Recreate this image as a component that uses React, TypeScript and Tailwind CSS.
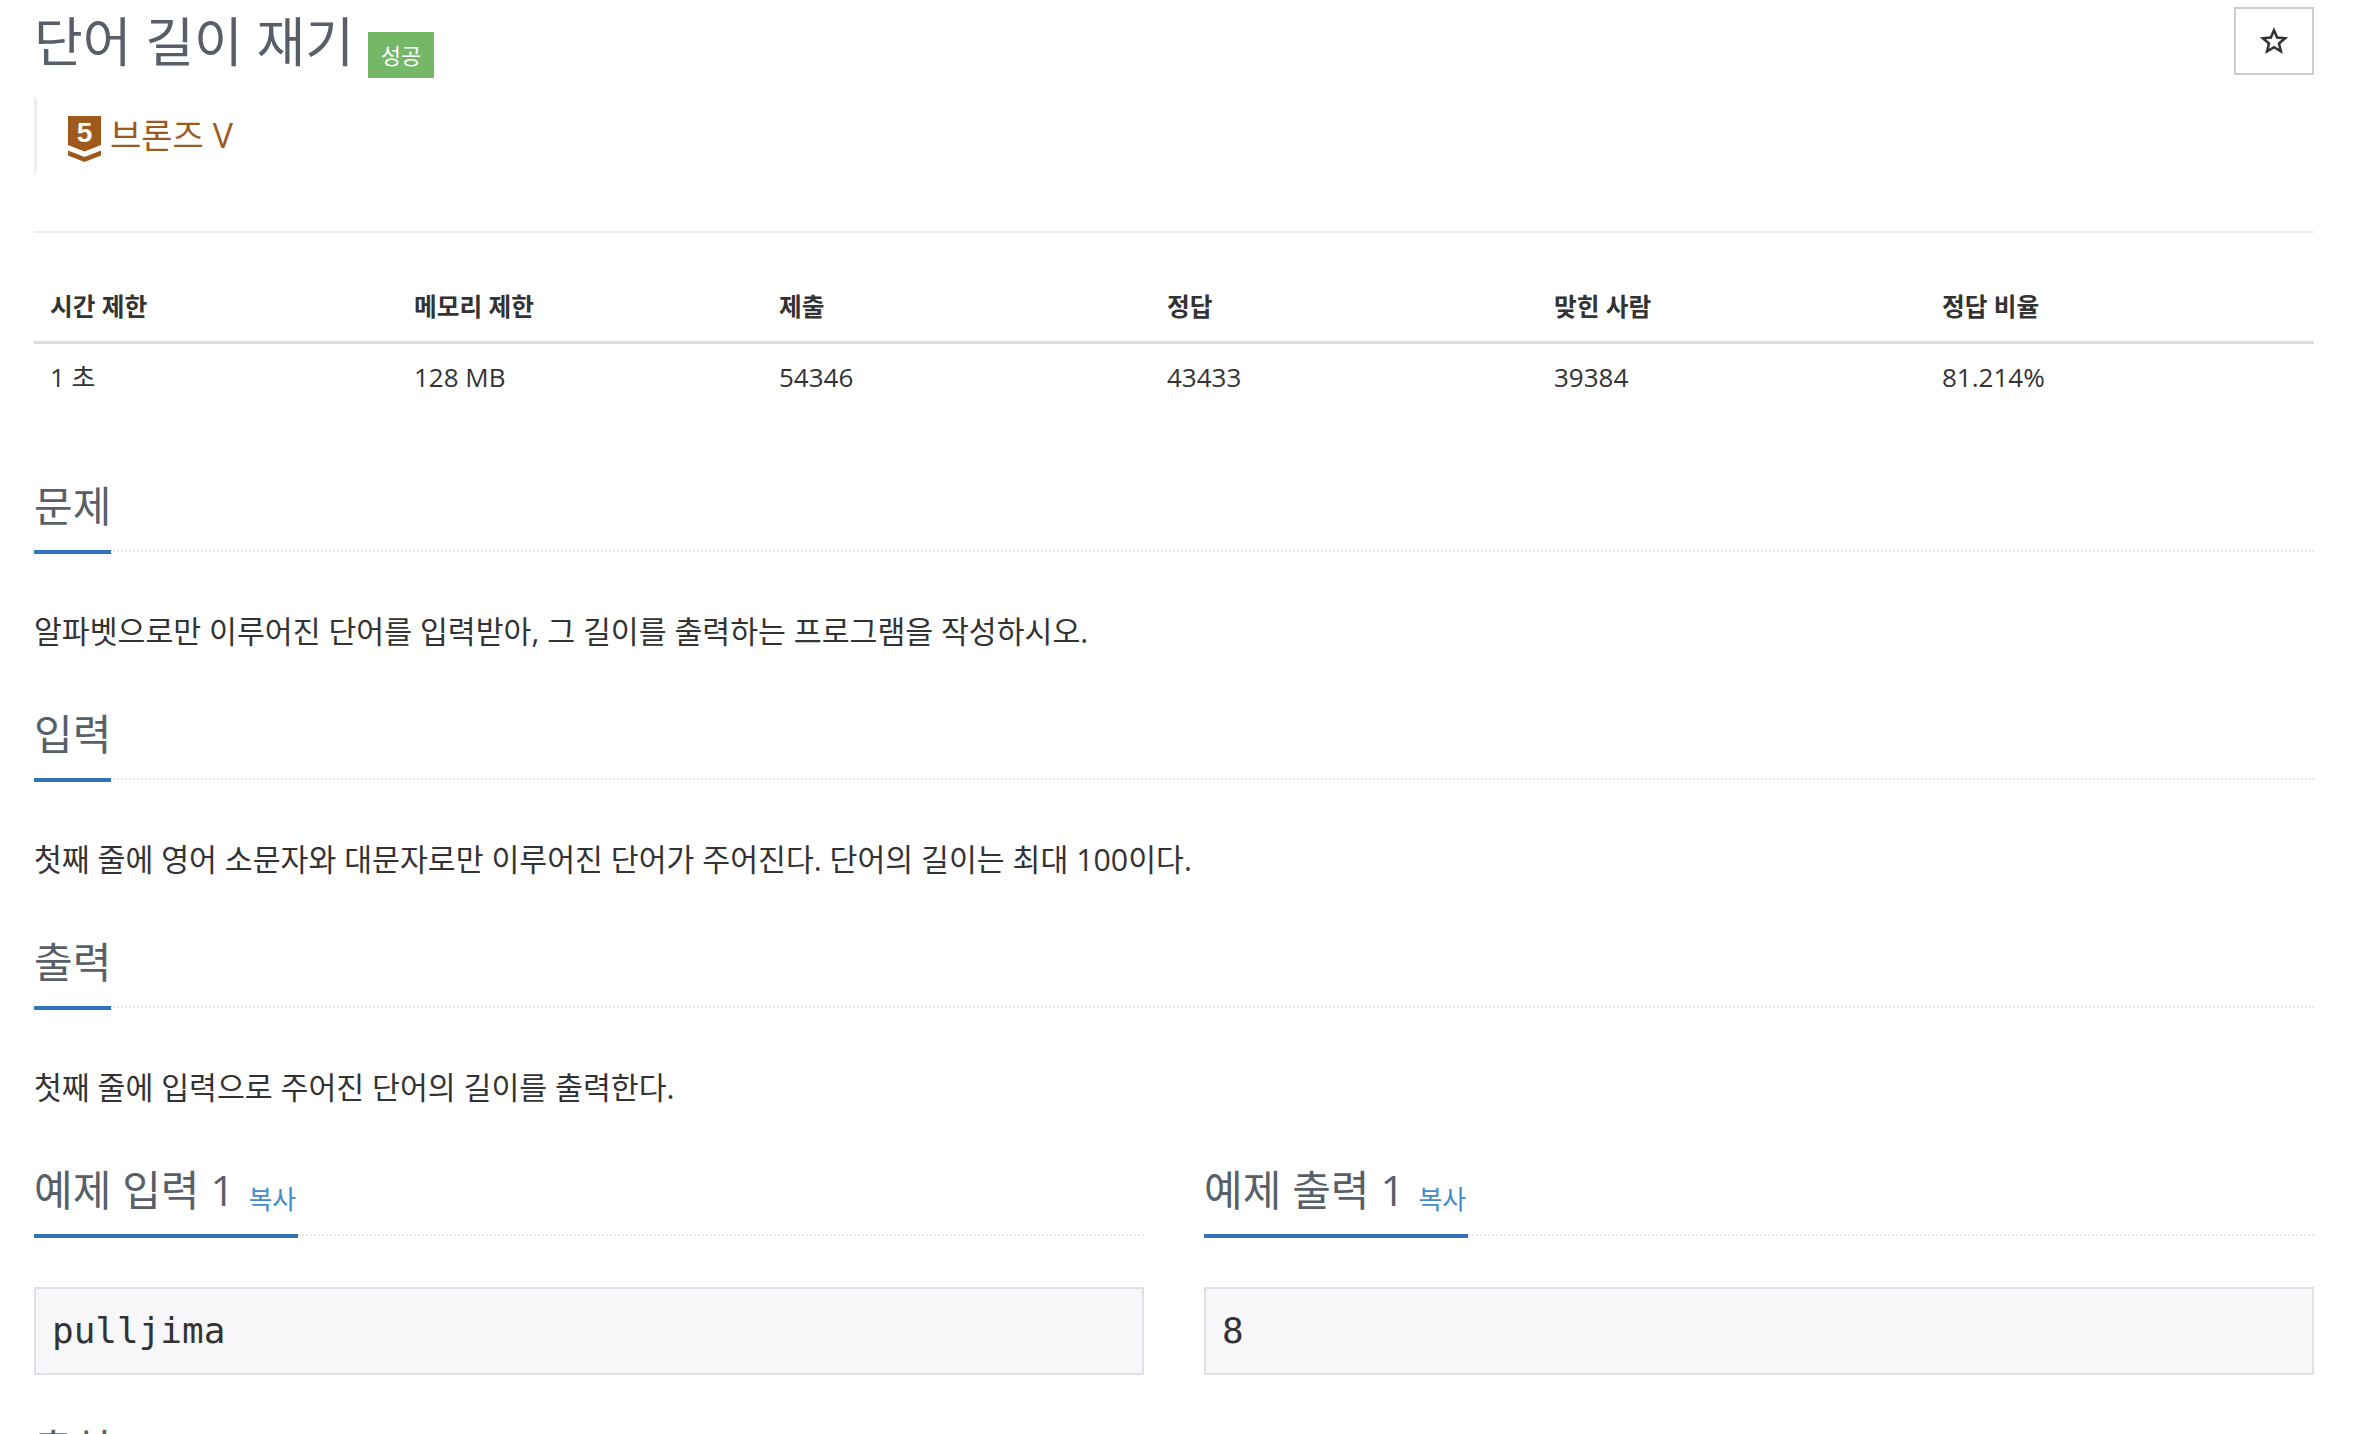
const KO = "font-['Open_Sans','Noto_Sans_CJK_KR',sans-serif]";

const stats = [
  { head: "시간 제한", value: "1 초", w: "w-[364px]" },
  { head: "메모리 제한", value: "128 MB", w: "w-[365px]" },
  { head: "제출", value: "54346", w: "w-[388px]" },
  { head: "정답", value: "43433", w: "w-[387px]" },
  { head: "맞힌 사람", value: "39384", w: "w-[388px]" },
  { head: "정답 비율", value: "81.214%", w: "flex-1" },
];

function Heading({ children, copy }: { children: string; copy?: boolean }) {
  return (
    <div className="h-[74px] border-b-2 border-dotted border-[#e5e7ec]">
      <div className="inline-flex h-[76px] items-start border-b-4 border-[#3073b8]">
        <span className="text-[42px] leading-[56px] text-[#585f69]">{children}</span>
        {copy && <span className="ml-[14px] mr-[2px] mt-[19px] text-[26px] leading-[36px] text-[#428bca]">복사</span>}
      </div>
    </div>
  );
}

function Section({ title, text }: { title: string; text: string }) {
  return (
    <section className="h-[228px]">
      <Heading>{title}</Heading>
      <p className="mt-[60px] text-[30.3px] leading-[40px] text-[#333]">{text}</p>
    </section>
  );
}

function Sample({ title, value }: { title: string; value: string }) {
  return (
    <div>
      <Heading copy>{title}</Heading>
      <pre className="mt-[51px] h-[88px] border-2 border-[#e0e0e6] bg-[#f7f7f9] px-[16px] text-[36px] leading-[84px] text-[#333] font-['DejaVu_Sans_Mono',monospace]">
        {value}
      </pre>
    </div>
  );
}

export default function App() {
  return (
    <div className={`h-[1434px] overflow-hidden bg-white pl-[34px] pr-[56px] ${KO}`}>
      <div className="flex h-[97px] items-start justify-between">
        <div className="flex items-start">
          <h1 className="text-[53px] leading-[84px] text-[#585f69]">단어 길이 재기</h1>
          <span className="ml-[14px] mt-[32px] flex h-[46px] w-[66px] items-center justify-center bg-[#74b767] text-[22px] text-white">
            성공
          </span>
        </div>
        <button className="mt-[7px] flex h-[68px] w-[80px] items-center justify-center border-2 border-[#ccc] text-[#333]">
          <svg viewBox="0 0 24 24" className="h-[28px] w-[28px]" fill="none" stroke="currentColor" strokeWidth="2.2">
            <path d="M12 2.800l2.700 6.300 6.800.6-5.200 4.500 1.600 6.700L12 17.300l-5.900 3.600 1.600-6.700-5.200-4.500 6.800-.6z" />
          </svg>
        </button>
      </div>

      <div className="flex h-[76px] border-l-[3px] border-[#eee] pl-[31px] pt-[19px]">
        <svg viewBox="0 0 33 46" className="h-[46px] w-[33px] shrink-0">
          <path d="M0 0h33v29l-16.500 6.500L0 29z" fill="#a0591d" />
          <path d="M0 34.500l16.500 6.500 16.500-6.500v5L16.500 46 0 39.500z" fill="#a0591d" />
          <text x="16.500" y="26" textAnchor="middle" fontSize="28" fontWeight="700" fill="#fff" fontFamily="'Liberation Sans',sans-serif">5</text>
        </svg>
        <span className="ml-[9px] text-[34px] leading-[38px] text-[#a0591d]">브론즈 V</span>
      </div>

      <div className="mt-[58px] border-t-2 border-[#eee]" />

      <div className="mt-[54px] flex h-[57px] border-b-[3px] border-[#ddd]">
        {stats.map((s) => (
          <div key={s.head} className={`${s.w} px-[16px] text-[24.700px] font-bold leading-[40px] text-[#333]`}>
            {s.head}
          </div>
        ))}
      </div>
      <div className="flex h-[66px]">
        {stats.map((s) => (
          <div key={s.head} className={`${s.w} px-[16px] text-[26px] leading-[66px] text-[#333]`}>
            {s.value}
          </div>
        ))}
      </div>

      <div className="mt-[68px]">
        <Section title="문제" text="알파벳으로만 이루어진 단어를 입력받아, 그 길이를 출력하는 프로그램을 작성하시오." />
        <Section title="입력" text="첫째 줄에 영어 소문자와 대문자로만 이루어진 단어가 주어진다. 단어의 길이는 최대 100이다." />
        <Section title="출력" text="첫째 줄에 입력으로 주어진 단어의 길이를 출력한다." />
      </div>

      <div className="grid grid-cols-2 gap-x-[60px]">
        <Sample title="예제 입력 1" value="pulljima" />
        <Sample title="예제 출력 1" value="8" />
      </div>

      <div className="mt-[46px] text-[42px] leading-[56px] text-[#585f69]">출처</div>
    </div>
  );
}
